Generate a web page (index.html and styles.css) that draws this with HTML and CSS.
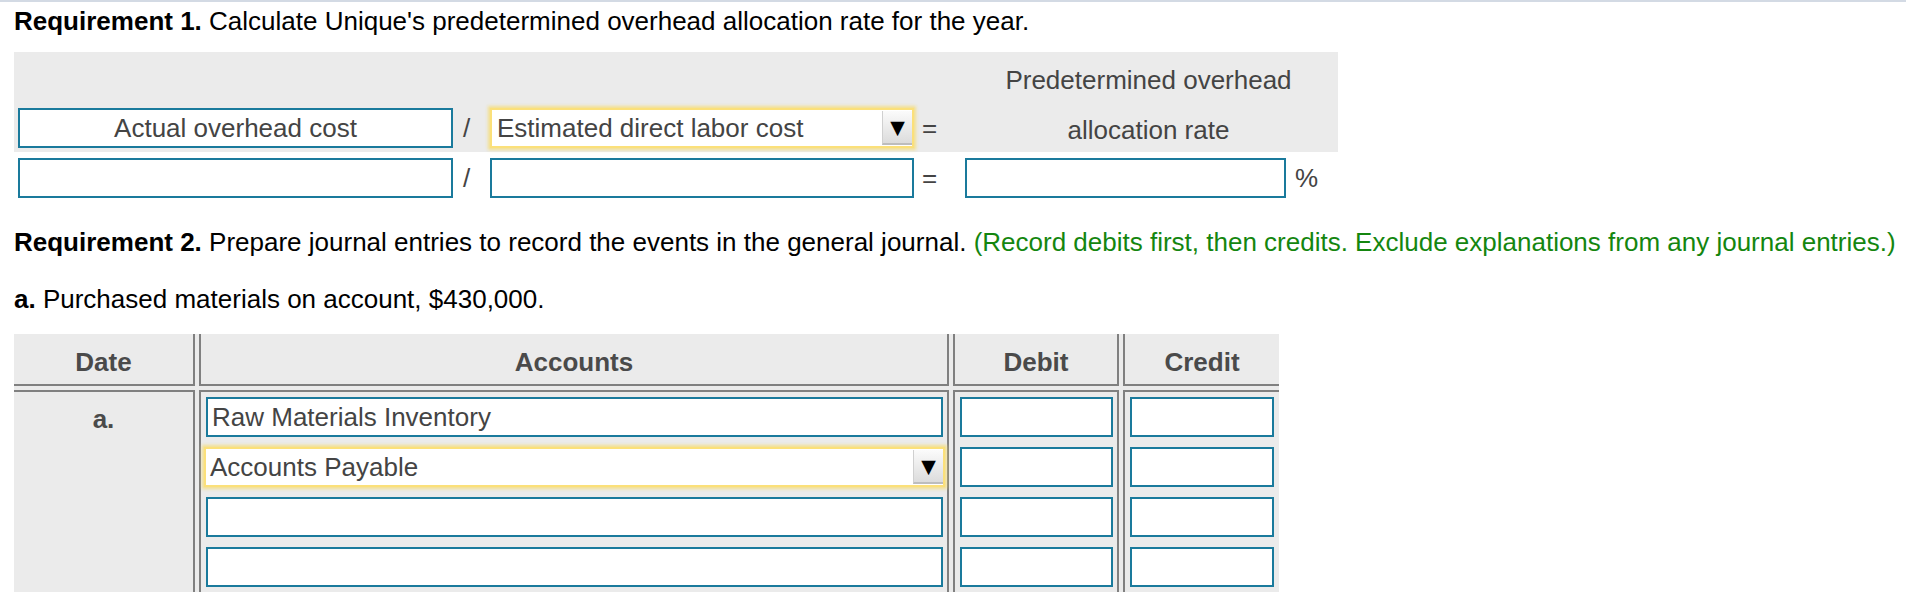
FILE: index.html
```html
<!DOCTYPE html>
<html>
<head>
<meta charset="utf-8">
<link rel="stylesheet" href="styles.css">
</head>
<body>
<div class="page">
  <p class="req req1"><b>Requirement 1.</b> Calculate Unique's predetermined overhead allocation rate for the year.</p>

  <div class="calc panel">
    <div class="label-top">Predetermined overhead</div>
    <div class="box centered">Actual overhead cost</div>
    <div class="op">/</div>
    <div class="select">
      <span class="select-text">Estimated direct labor cost</span>
      <span class="drop-btn">&#9660;</span>
    </div>
    <div class="op eq">=</div>
    <div class="label-bottom">allocation rate</div>
  </div>
  <div class="calc values">
    <div class="box"></div>
    <div class="op">/</div>
    <div class="box"></div>
    <div class="op eq">=</div>
    <div class="box"></div>
    <div class="op pct">%</div>
  </div>

  <p class="req req2"><b>Requirement 2.</b> Prepare journal entries to record the events in the general journal. <span class="hint">(Record debits first, then credits. Exclude explanations from any journal entries.)</span></p>

  <p class="req event"><b>a.</b> Purchased materials on account, $430,000.</p>

  <div class="journal">
    <div class="th th-date">Date</div>
    <div class="th th-acc">Accounts</div>
    <div class="th th-deb">Debit</div>
    <div class="th th-cred">Credit</div>

    <div class="td td-date">a.</div>
    <div class="td td-acc">
      <div class="box left">Raw Materials Inventory</div>
      <div class="select wide">
        <span class="select-text">Accounts Payable</span>
        <span class="drop-btn">&#9660;</span>
      </div>
      <div class="box"></div>
      <div class="box"></div>
    </div>
    <div class="td td-deb">
      <div class="box"></div>
      <div class="box"></div>
      <div class="box"></div>
      <div class="box"></div>
    </div>
    <div class="td td-cred">
      <div class="box"></div>
      <div class="box"></div>
      <div class="box"></div>
      <div class="box"></div>
    </div>
  </div>
</div>
</body>
</html>
```

FILE: styles.css
```css
html, body {
  margin: 0;
  padding: 0;
  background: #ffffff;
}

body {
  font-family: "Liberation Sans", Arial, sans-serif;
  font-size: 26px;
  color: #000;
}

.page {
  border-top: 2px solid #d3dae4;
  padding-left: 14px;
}

.req {
  margin: 0;
  line-height: 30px;
  white-space: nowrap;
}

.req1 {
  margin-top: 4px;
}

.req2 {
  margin-top: 29px;
}

.event {
  margin-top: 27px;
}

.hint {
  color: #14860f;
}

/* ---------- Requirement 1 calculation ---------- */

.calc {
  display: grid;
  grid-template-columns: 435px 37px 424px 51px 321px 1fr;
  width: 1324px;
  box-sizing: border-box;
  padding-left: 4px;
  color: #444;
}

.panel {
  margin-top: 16px;
  background: #ebebeb;
  grid-template-rows: 56px 40px;
  padding-bottom: 4px;
}

.values {
  margin-top: 6px;
  grid-template-rows: 40px;
}

.label-top {
  grid-column: 5 / 7;
  grid-row: 1;
  text-align: center;
  line-height: 56px;
  padding-right: 6px;
}

.label-bottom {
  grid-column: 5 / 7;
  grid-row: 2;
  text-align: center;
  line-height: 44px;
  padding-right: 6px;
}

.panel .box,
.panel .select,
.panel .op {
  grid-row: 2;
}

.op {
  line-height: 40px;
  padding-left: 10px;
  color: #444;
}

.op.eq {
  padding-left: 8px;
}

.op.pct {
  padding-left: 9px;
}

.box {
  box-sizing: border-box;
  height: 40px;
  border: 2px solid #1a7a9c;
  background: #fff;
  line-height: 36px;
  color: #444;
  white-space: nowrap;
  overflow: hidden;
}

.box.centered {
  text-align: center;
}

.box.left {
  padding-left: 4px;
}

.select {
  box-sizing: border-box;
  height: 40px;
  border: 2px solid #fbe07a;
  box-shadow: 0 0 3px 2px rgba(248, 216, 90, 0.65);
  background: #fff;
  display: flex;
  align-items: stretch;
  color: #444;
}

.select-text {
  flex: 1;
  padding-left: 5px;
  line-height: 36px;
  white-space: nowrap;
}

.drop-btn {
  width: 30px;
  margin: 1px 0 1px 0;
  box-sizing: border-box;
  border-left: 1px solid #d0d0d0;
  border-bottom: 2px solid #bdbdbd;
  background: linear-gradient(#fbfbfb, #dcdcdc);
  color: #000;
  font-family: "DejaVu Sans", sans-serif;
  font-size: 19px;
  line-height: 33px;
  text-align: center;
}

/* ---------- Journal table ---------- */

.journal {
  margin-top: 20px;
  width: 1265px;
  display: grid;
  grid-template-columns: 181px 750px 166px 156px;
  grid-template-rows: 52px 202px;
  column-gap: 4px;
  row-gap: 4px;
  background: #ebebeb;
  color: #4a4a4a;
}

.th {
  font-weight: bold;
  text-align: center;
  line-height: 52px;
  border-bottom: 2px solid #808080;
  box-sizing: border-box;
  padding-top: 2px;
}

.th-date {
  border-right: 2px solid #808080;
}

.th-acc,
.th-deb {
  border-left: 2px solid #808080;
  border-right: 2px solid #808080;
}

.th-cred {
  border-left: 2px solid #808080;
}

.td {
  border-top: 2px solid #808080;
  box-sizing: border-box;
  display: flex;
  flex-direction: column;
  gap: 10px;
  padding-top: 5px;
}

.td-date {
  border-right: 2px solid #808080;
  font-weight: bold;
  text-align: center;
  line-height: 40px;
  padding-top: 7px;
  display: block;
}

.td-acc {
  border-left: 2px solid #808080;
  border-right: 2px solid #808080;
  padding-left: 5px;
  padding-right: 4px;
}

.td-deb {
  border-left: 2px solid #808080;
  border-right: 2px solid #808080;
  padding-left: 5px;
  padding-right: 4px;
}

.td-cred {
  border-left: 2px solid #808080;
  padding-left: 5px;
  padding-right: 5px;
}

.select.wide {
  margin-left: -2px;
  margin-right: -2px;
}

.select.wide .select-text {
  padding-left: 4px;
}
```
